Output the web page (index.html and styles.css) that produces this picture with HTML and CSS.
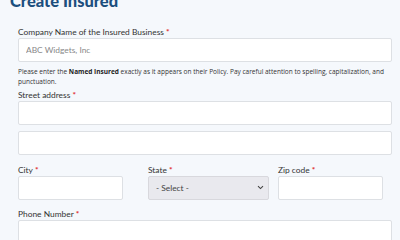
FILE: index.html
```html
<!DOCTYPE html>
<html>
<head>
<meta charset="utf-8">
<link rel="stylesheet" href="styles.css">
</head>
<body>
<div class="page">
  <h1 class="title">Create Insured</h1>
  <div class="field f-company">
    <label class="label">Company Name of the Insured Business <span class="req">*</span></label>
    <input class="input" type="text" placeholder="ABC Widgets, Inc">
    <p class="help">Please enter the <b>Named Insured</b> exactly as it appears on their Policy. Pay careful attention to spelling, capitalization, and punctuation.</p>
  </div>
  <div class="field f-street">
    <label class="label">Street address <span class="req">*</span></label>
    <input class="input" type="text">
    <input class="input second" type="text">
  </div>
  <div class="row">
    <div class="field">
      <label class="label">City <span class="req">*</span></label>
      <input class="input short" type="text">
    </div>
    <div class="field">
      <label class="label">State <span class="req">*</span></label>
      <div class="select">
        <span>- Select -</span>
        <svg class="chev" width="7" height="5" viewBox="0 0 7 5"><path d="M1 1.2 L3.5 3.6 L6 1.2" fill="none" stroke="#444" stroke-width="1.1"/></svg>
      </div>
    </div>
    <div class="field">
      <label class="label">Zip code <span class="req">*</span></label>
      <input class="input short" type="text">
    </div>
  </div>
  <div class="field f-phone">
    <label class="label">Phone Number <span class="req">*</span></label>
    <input class="input" type="text">
  </div>
</div>
</body>
</html>
```
FILE: styles.css
```css
html, body {
  margin: 0;
  padding: 0;
  background: #f5f8fc;
  overflow: hidden;
}
.page {
  padding: 0 8px 0 18px;
  font-family: Lato, "Open Sans", "Liberation Sans", sans-serif;
  color: #333;
}
.title {
  margin: -7px 0 0 -8px;
  font-family: Lato, sans-serif;
  font-size: 16.5px;
  line-height: 16px;
  font-weight: 900;
  color: #1c4f7e;
}
.field {
  display: flex;
  flex-direction: column;
}
.f-company { margin-top: 18px; }
.f-street { margin-top: 4px; }
.f-phone { margin-top: 9px; }
.label {
  font-size: 8.4px;
  line-height: 11px;
  height: 11px;
  color: #333;
  display: block;
}
.req { color: #e02a2a; font-weight: 700; }
.input {
  box-sizing: border-box;
  height: 24px;
  width: 100%;
  margin: 0;
  border: 1px solid #dde0e4;
  border-radius: 2px;
  background: #fff;
  font-family: inherit;
  font-size: 8.4px;
  padding: 0 7px;
  outline: none;
}
.input::placeholder { color: #888; }
.second { margin-top: 6px; }
.help {
  margin: 5px 0 0;
  font-family: "Open Sans", sans-serif;
  font-size: 6.5px;
  line-height: 9.5px;
  color: #333;
}
.help b { font-weight: 700; color: #222; }
.row {
  display: grid;
  grid-template-columns: 121px 121px 121px;
  column-gap: 9px;
  margin-top: 9.5px;
}
.short { width: 105px; }
.select {
  box-sizing: border-box;
  height: 24px;
  border: 1px solid #d8d8dd;
  border-radius: 2px;
  background: #e9e9ee;
  display: flex;
  align-items: center;
  justify-content: space-between;
  padding: 0 4px 0 7px;
  font-size: 8.4px;
  color: #444;
}
.chev { display: block; }
```
